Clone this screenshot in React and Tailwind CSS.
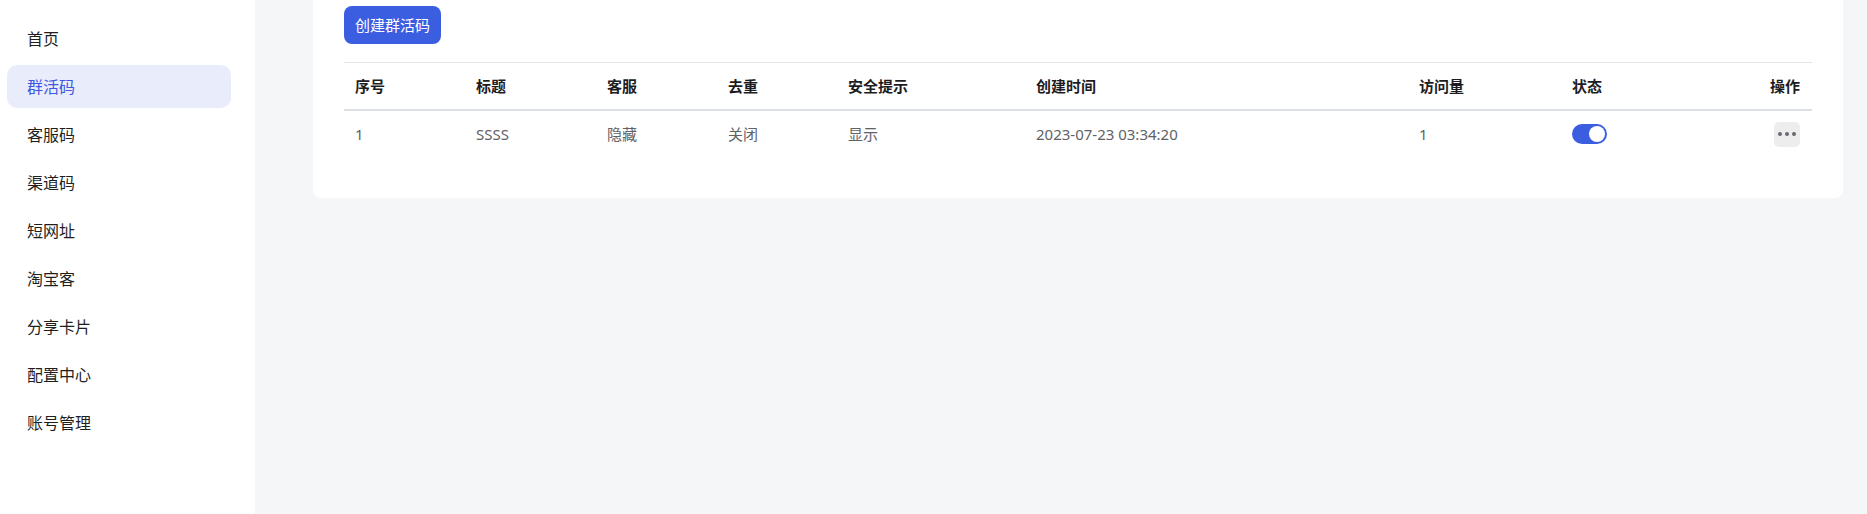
import { useState } from 'react';

const MENU = ['首页', '群活码', '客服码', '渠道码', '短网址', '淘宝客', '分享卡片', '配置中心', '账号管理'];

const COLUMNS = ['序号', '标题', '客服', '去重', '安全提示', '创建时间', '访问量'];

const ROWS = [
    { id: 1, title: 'SSSS', service: '隐藏', dedupe: '关闭', tip: '显示', createdAt: '2023-07-23 03:34:20', visits: 1, enabled: true },
];

const GRID = 'grid grid-cols-[121px_131px_121px_120px_188px_383px_153px_1fr]';

const Sidebar = ({ active }) => (
    <aside className="w-[255px] shrink-0 bg-white pt-[17px] flex flex-col gap-[5px]">
        {MENU.map((label) => (
            <div
                key={label}
                className={`ml-[7px] mr-[24px] h-[43px] rounded-[10px] pl-[20px] flex items-center text-[16px] ${label === active ? 'bg-[#e9edfb] text-[#3f57de]' : 'text-[#1f1f1f]'}`}
            >
                {label}
            </div>
        ))}
    </aside>
);

const Toggle = ({ on }) => (
    <div className={`w-[35px] h-[20px] rounded-full flex items-center px-[2px] ${on ? 'bg-[#3b5ee0] justify-end' : 'bg-[#dcdfe6] justify-start'}`}>
        <div className="w-[16px] h-[16px] rounded-full bg-white" />
    </div>
);

const MoreButton = () => (
    <div className="w-[26px] h-[25px] rounded-[5px] bg-[#ededed] flex items-center justify-center gap-[3px]">
        <span className="w-[4px] h-[4px] rounded-full bg-[#666a70]" />
        <span className="w-[4px] h-[4px] rounded-full bg-[#666a70]" />
        <span className="w-[4px] h-[4px] rounded-full bg-[#666a70]" />
    </div>
);

const App = () => {
    const [rows] = useState(ROWS);

    return (
        <div className="flex h-[514px] w-full bg-[#f5f6f8] text-[15px]" style={{ fontFamily: '"Noto Sans", "Noto Sans CJK SC", sans-serif' }}>
            <Sidebar active="群活码" />

            <main className="flex-1 pl-[58px] pr-[24px]">
                <div className="bg-white rounded-b-[8px] pt-[6px] px-[31px] pb-[41px]">
                    <button className="h-[38px] px-[11px] rounded-[8px] bg-[#3b5ee0] text-white text-[15px] leading-none">
                        创建群活码
                    </button>

                    <div className="mt-[18px] border-t border-[#e4e5ea]">
                        <div className={`${GRID} h-[48px] items-center border-b-2 border-[#dcdfe4] font-bold text-[#1d1d1f]`}>
                            {COLUMNS.map((col) => (
                                <div key={col} className="pl-[11px]">{col}</div>
                            ))}
                            <div className="pl-[11px] pr-[12px] flex items-center justify-between">
                                <span>状态</span>
                                <span>操作</span>
                            </div>
                        </div>

                        {rows.map((row) => (
                            <div key={row.id} className={`${GRID} h-[46px] items-center text-[#606266]`}>
                                <div className="pl-[11px]">{row.id}</div>
                                <div className="pl-[11px]">{row.title}</div>
                                <div className="pl-[11px]">{row.service}</div>
                                <div className="pl-[11px]">{row.dedupe}</div>
                                <div className="pl-[11px]">{row.tip}</div>
                                <div className="pl-[11px]">{row.createdAt}</div>
                                <div className="pl-[11px]">{row.visits}</div>
                                <div className="pl-[11px] pr-[12px] flex items-center justify-between">
                                    <Toggle on={row.enabled} />
                                    <MoreButton />
                                </div>
                            </div>
                        ))}
                    </div>
                </div>
            </main>
        </div>
    );
};

export default App;
